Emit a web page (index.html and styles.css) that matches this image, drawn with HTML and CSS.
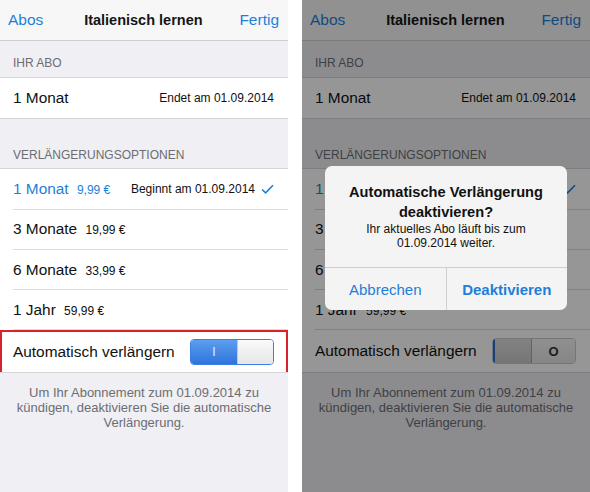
FILE: index.html
```html
<!DOCTYPE html>
<html lang="de">
	<head>
		<meta charset="UTF-8" />
		<meta name="viewport" content="width=device-width, initial-scale=1.0" />
		<title>Abo - Italienisch lernen</title>
		<link rel="stylesheet" href="styles.css">
	</head>

	<body>
		<!-- écran 1 : réglages de l'abo -->
		<section class="phone">
			<header class="navbar">
				<a href="#" class="nav-link">Abos</a>
				<h1>Italienisch lernen</h1>
				<a href="#" class="nav-link">Fertig</a>
			</header>

			<h2 class="section-title">IHR ABO</h2>
			<div class="group">
				<div class="row">
					<span class="label">1 Monat</span>
					<span class="detail">Endet am 01.09.2014</span>
				</div>
			</div>

			<h2 class="section-title section-title-big">VERLÄNGERUNGSOPTIONEN</h2>
			<div class="group">
				<div class="row row-active">
					<span class="label">1 Monat <small>9,99 €</small></span>
					<span class="detail">Beginnt am 01.09.2014
						<svg class="check" width="13" height="10" viewBox="0 0 13 10"><path d="M1 5.5l3.6 3.3L12 1.2" fill="none" stroke="#1e7fd8" stroke-width="1.6"/></svg>
					</span>
				</div>
				<div class="row"><span class="label">3 Monate <small>19,99 €</small></span></div>
				<div class="row"><span class="label">6 Monate <small>33,99 €</small></span></div>
				<div class="row"><span class="label">1 Jahr <small>59,99 €</small></span></div>
				<div class="row row-auto row-marked">
					<span class="label">Automatisch verlängern</span>
					<span class="toggle toggle-on">
						<span class="toggle-track">I</span>
						<span class="toggle-knob"></span>
					</span>
				</div>
			</div>

			<p class="footnote">Um Ihr Abonnement zum 01.09.2014 zu<br>kündigen, deaktivieren Sie die automatische<br>Verlängerung.</p>
		</section>

		<!-- écran 2 : confirmation de la désactivation -->
		<section class="phone">
			<header class="navbar">
				<a href="#" class="nav-link">Abos</a>
				<h1>Italienisch lernen</h1>
				<a href="#" class="nav-link">Fertig</a>
			</header>

			<h2 class="section-title">IHR ABO</h2>
			<div class="group">
				<div class="row">
					<span class="label">1 Monat</span>
					<span class="detail">Endet am 01.09.2014</span>
				</div>
			</div>

			<h2 class="section-title section-title-big">VERLÄNGERUNGSOPTIONEN</h2>
			<div class="group">
				<div class="row row-active">
					<span class="label">1 Monat <small>9,99 €</small></span>
					<span class="detail">Beginnt am 01.09.2014
						<svg class="check" width="13" height="10" viewBox="0 0 13 10"><path d="M1 5.5l3.6 3.3L12 1.2" fill="none" stroke="#1e7fd8" stroke-width="1.6"/></svg>
					</span>
				</div>
				<div class="row"><span class="label">3 Monate <small>19,99 €</small></span></div>
				<div class="row"><span class="label">6 Monate <small>33,99 €</small></span></div>
				<div class="row"><span class="label">1 Jahr <small>59,99 €</small></span></div>
				<div class="row row-auto">
					<span class="label">Automatisch verlängern</span>
					<span class="toggle toggle-off">
						<span class="toggle-knob"></span>
						<span class="toggle-track">O</span>
					</span>
				</div>
			</div>

			<p class="footnote">Um Ihr Abonnement zum 01.09.2014 zu<br>kündigen, deaktivieren Sie die automatische<br>Verlängerung.</p>

			<!-- voile sombre + boîte de dialogue -->
			<div class="overlay"></div>
			<div class="alert">
				<h3>Automatische Verlängerung<br>deaktivieren?</h3>
				<p>Ihr aktuelles Abo läuft bis zum<br>01.09.2014 weiter.</p>
				<div class="alert-buttons">
					<button>Abbrechen</button>
					<button class="strong">Deaktivieren</button>
				</div>
			</div>
		</section>
	</body>
</html>
```

FILE: styles.css
```css
body {
	font-family: "Liberation Sans", Arial, sans-serif;
	margin: 0;
	padding: 0;
	background-color: white;
	display: flex;
	gap: 14px;
	height: 492px;
	overflow: hidden;
}
.phone {
	position: relative;
	width: 288px;
	height: 492px;
	background-color: #efeff4;
	overflow: hidden;
	color: #111;
}
.navbar {
	height: 40px;
	background-color: #f7f7f8;
	border-bottom: 1px solid #cfcfd3;
	display: flex;
	align-items: center;
	justify-content: space-between;
	padding: 0 9px 0 8px;
}
.navbar h1 {
	font-size: 14.5px;
	font-weight: bold;
	margin: 0 0 0 4px;
	color: #151515;
}
.nav-link {
	color: #1e7fd8;
	font-size: 15.5px;
	text-decoration: none;
}
.section-title {
	margin: 0;
	font-size: 12px;
	font-weight: normal;
	line-height: 14px;
	color: #6d6d72;
	padding: 15px 13px 7px;
}
.section-title-big {
	padding-top: 29px;
	padding-bottom: 6px;
}
.group {
	background-color: white;
	border-top: 1px solid #d6d6da;
	border-bottom: 1px solid #d6d6da;
}
.row {
	box-sizing: border-box;
	height: 40.3px;
	margin-left: 13px;
	padding-right: 14px;
	display: flex;
	align-items: center;
	justify-content: space-between;
	border-bottom: 1px solid #dcdce0;
	font-size: 15.4px;
}
.group > .row:last-child {
	border-bottom: none;
}
.row small {
	font-size: 12px;
	margin-left: 4px;
}
.row-active .label {
	color: #1e7fd8;
}
.detail {
	font-size: 12px;
	display: flex;
	align-items: center;
	gap: 5px;
}
.check {
	margin-left: 1px;
}
.row-auto {
	height: 42px;
	margin-left: 0;
	padding-left: 13px;
}
.row-marked {
	border: 2px solid #d9232c;
	padding-left: 11px;
	padding-right: 12px;
}
.footnote {
	margin: 0;
	padding-top: 12px;
	font-size: 13px;
	line-height: 15px;
	text-align: center;
	color: #6d6d72;
}

/* interrupteur */
.toggle {
	display: flex;
	width: 84px;
	height: 26px;
	border-radius: 4px;
	overflow: hidden;
	box-sizing: border-box;
	border: 1px solid #c9c9cc;
}
.toggle-track {
	flex: 1;
	display: flex;
	align-items: center;
	justify-content: center;
	font-size: 12px;
}
.toggle-on .toggle-track {
	background: linear-gradient(#5b9ff0, #2f74dc);
	color: #e8f1ff;
}
.toggle-on {
	border-color: #3b7fe0;
}
.toggle-knob {
	width: 35px;
	background: linear-gradient(#fafafa, #e6e6e6);
	border-left: 1px solid #c8c8cc;
}
.toggle-off .toggle-knob {
	width: 36px;
	border-left: 2px solid #1e6fd8;
	border-right: 1px solid #a9a9ad;
	background: linear-gradient(#dedede, #c8c8c8);
}
.toggle-off .toggle-track {
	background: linear-gradient(#f4f4f4, #e4e4e4);
	color: #333;
	font-weight: bold;
	font-size: 13px;
}

/* dialogue */
.overlay {
	position: absolute;
	inset: 0;
	background-color: rgba(0, 0, 0, 0.41);
}
.alert {
	position: absolute;
	top: 166px;
	left: 23px;
	width: 242px;
	background-color: #f4f4f4;
	border-radius: 7px;
	text-align: center;
	overflow: hidden;
}
.alert h3 {
	margin: 0;
	padding-top: 16px;
	font-size: 14.6px;
	line-height: 20px;
	font-weight: bold;
	color: #111;
}
.alert p {
	margin: 0;
	padding-bottom: 17px;
	font-size: 12px;
	line-height: 14px;
	color: #111;
}
.alert-buttons {
	display: flex;
	border-top: 1px solid #cfcfd3;
}
.alert-buttons button {
	flex: 1;
	height: 42px;
	border: none;
	background: none;
	font-family: inherit;
	font-size: 15px;
	color: #1e7fd8;
	padding: 0;
}
.alert-buttons button + button {
	border-left: 1px solid #cfcfd3;
}
.alert-buttons .strong {
	font-weight: bold;
}
```
